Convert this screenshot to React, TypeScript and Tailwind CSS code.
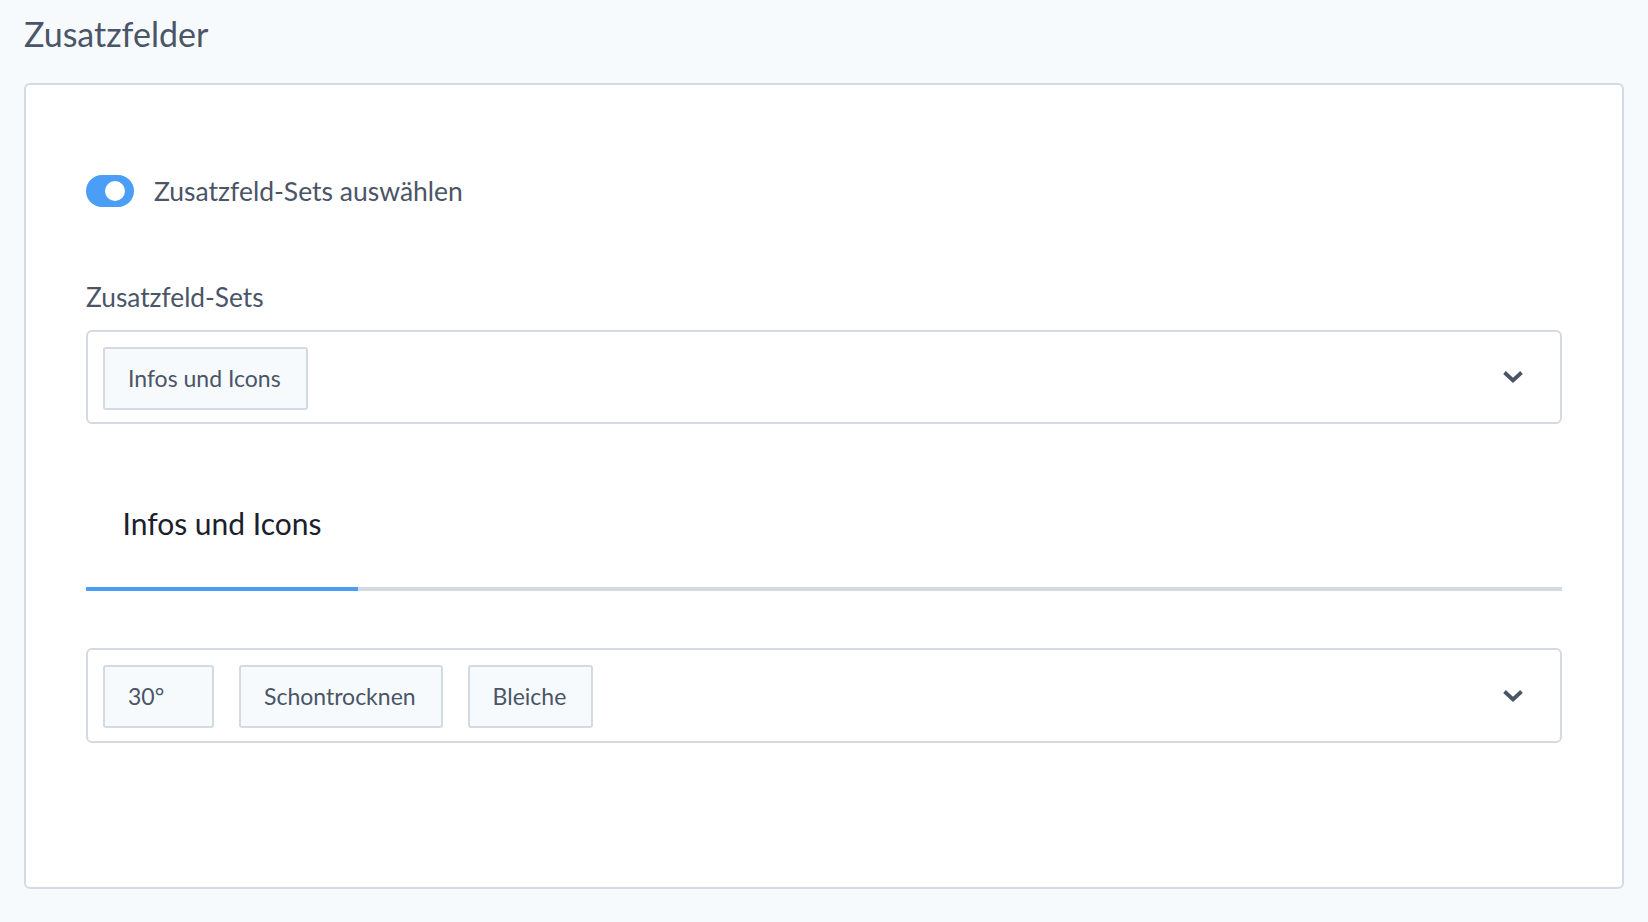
import React from "react";

function Chevron() {
  return (
    <svg width="22" height="14" viewBox="0 0 22 14" fill="none" className="shrink-0">
      <polyline points="2.5,2.5 11,10.5 19.5,2.5" stroke="#4a5568" strokeWidth="3.8" strokeLinejoin="miter" strokeLinecap="butt" fill="none" />
    </svg>
  );
}

function Chip({ children }: { children: React.ReactNode }) {
  return (
    <div className="h-[63px] min-w-[111px] flex items-center pl-[23px] pr-[25px] border-2 border-[#d3dae2] bg-[#f7fafc] rounded-[3px] text-[23px] leading-none text-[#4a5568] whitespace-nowrap">
      {children}
    </div>
  );
}

export default function App() {
  return (
    <div className="min-h-screen w-full bg-[#f7fafc] font-['Lato','Noto_Sans',sans-serif] px-[24px]">
      <div className="pt-[17px] text-[34px] leading-[34px] text-[#4a5568]">Zusatzfelder</div>
      <div className="mt-[32px] bg-white border-2 border-[#d3dae2] rounded-[6px] px-[60px] pt-[90px] pb-[144px]">
        <div className="flex items-center gap-[20px]">
          <div className="w-[48px] h-[32px] rounded-full bg-[#4a9ef6] flex items-center pl-[19px]">
            <div className="w-[20px] h-[20px] rounded-full bg-white" />
          </div>
          <div className="text-[26.5px] leading-[32px] text-[#4a5568]">Zusatzfeld-Sets auswählen</div>
        </div>

        <div className="mt-[76px] text-[26.3px] leading-[28px] text-[#4a5568]">Zusatzfeld-Sets</div>

        <div className="mt-[19px] h-[94px] border-2 border-[#d3dae2] rounded-[6px] flex items-center pl-[15px] pr-[36px]">
          <div className="flex-1 flex items-center gap-[25px] pt-[3px]">
            <Chip>Infos und Icons</Chip>
          </div>
          <Chevron />
        </div>

        <div className="mt-[84px]">
          <div className="w-[272px] text-center text-[30px] leading-[30px] text-[#1a202c]">Infos und Icons</div>
          <div className="mt-[49px] h-[4px] bg-[#d3dae2] flex">
            <div className="w-[272px] h-full bg-[#4a9ef6]" />
          </div>
        </div>

        <div className="mt-[57px] h-[95px] border-2 border-[#d3dae2] rounded-[6px] flex items-center pl-[15px] pr-[36px]">
          <div className="flex-1 flex items-center gap-[25px] pt-[1px]">
            <Chip>30°</Chip>
            <Chip>Schontrocknen</Chip>
            <Chip>Bleiche</Chip>
          </div>
          <Chevron />
        </div>
      </div>
    </div>
  );
}
